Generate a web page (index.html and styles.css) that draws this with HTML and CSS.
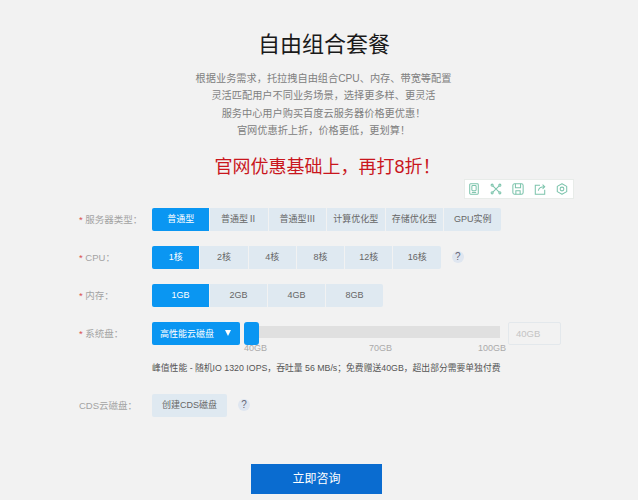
FILE: index.html
```html
<!DOCTYPE html>
<html lang="zh-CN">
<head>
    <meta charset="UTF-8">
    <title>自由组合套餐</title>
    <link rel="stylesheet" href="styles.css">
</head>
<body>
    <div class="wrap">
        <!-- Intro -->
        <h1 class="title">自由组合套餐</h1>
        <div class="intro">
            <p>根据业务需求，托拉拽自由组合CPU、内存、带宽等配置</p>
            <p>灵活匹配用户不同业务场景，选择更多样、更灵活</p>
            <p>服务中心用户购买百度云服务器价格更优惠！</p>
            <p>官网优惠折上折，价格更低，更划算！</p>
        </div>
        <h2 class="promo">官网优惠基础上，再打8折！</h2>

        <!-- Toolbar -->
        <div class="toolbar-row">
            <div class="toolbar">
                <svg viewBox="0 0 14 14"><rect x="2" y="1" width="10" height="12" rx="1"/><rect x="4.500" y="3" width="5" height="6" rx="1"/><path d="M4.500 11h5"/></svg>
                <svg viewBox="0 0 14 14"><path d="M3 3l8 8M11 3l-8 8"/><circle cx="2.500" cy="2.500" r="1.200"/><circle cx="11.500" cy="2.500" r="1.200"/><circle cx="2.500" cy="11.500" r="1.200"/><circle cx="11.500" cy="11.500" r="1.200"/></svg>
                <svg viewBox="0 0 14 14"><rect x="1" y="1" width="12" height="12" rx="2"/><path d="M4 1v4.500h6v-4.500M4.500 13v-4h5v4"/></svg>
                <svg viewBox="0 0 14 14"><path d="M7 2.500h-5.500v10.500h11v-5"/><path d="M5 9c.5-3 3-4.500 7.500-4.500M10 2l2.500 2.500-2.500 2.500"/></svg>
                <svg viewBox="0 0 14 14"><path d="M7 .8l5.500 3.100v6.200l-5.500 3.100-5.500-3.100v-6.200z" stroke-linejoin="round"/><circle cx="7" cy="7" r="2.200"/></svg>
            </div>
        </div>

        <!-- Config form -->
        <div class="row">
            <div class="label"><span class="req">*</span> 服务器类型：</div>
            <div class="group wide">
                <span class="opt on">普通型</span>
                <span class="opt">普通型Ⅱ</span>
                <span class="opt">普通型Ⅲ</span>
                <span class="opt">计算优化型</span>
                <span class="opt">存储优化型</span>
                <span class="opt">GPU实例</span>
            </div>
        </div>
        <div class="row">
            <div class="label"><span class="req">*</span> CPU：</div>
            <div class="group small">
                <span class="opt on">1核</span>
                <span class="opt">2核</span>
                <span class="opt">4核</span>
                <span class="opt">8核</span>
                <span class="opt">12核</span>
                <span class="opt">16核</span>
            </div>
            <span class="help">?</span>
        </div>
        <div class="row">
            <div class="label"><span class="req">*</span> 内存：</div>
            <div class="group">
                <span class="opt on">1GB</span>
                <span class="opt">2GB</span>
                <span class="opt">4GB</span>
                <span class="opt">8GB</span>
            </div>
        </div>
        <div class="row disk-row">
            <div class="label"><span class="req">*</span> 系统盘：</div>
            <div class="select">高性能云磁盘<i class="arrow"></i></div>
            <div class="slider">
                <div class="track"><span class="thumb"></span></div>
                <div class="marks">
                    <span>40GB</span>
                    <span class="mid">70GB</span>
                    <span>100GB</span>
                </div>
            </div>
            <div class="size-input">40GB</div>
        </div>
        <p class="note">峰值性能 - 随机IO 1320 IOPS，吞吐量 56 MB/s；免费赠送40GB，超出部分需要单独付费</p>
        <div class="row cds-row">
            <div class="label">CDS云磁盘：</div>
            <span class="opt create">创建CDS磁盘</span>
            <span class="help">?</span>
        </div>

        <div class="submit-row">
            <a class="submit">立即咨询</a>
        </div>
    </div>
</body>
</html>
```

FILE: styles.css
```css
/* General body styling */
body {
    margin: 0;
    background-color: #f2f2f2;
    font-family: "Liberation Sans", "Noto Sans CJK SC", sans-serif;
    color: #666;
}

.wrap {
    height: 500px;
    overflow: hidden;
    padding-left: 79px;
    box-sizing: border-box;
}

/* Intro */
.title {
    margin: 30px 0 0 -79px;
    padding-left: 10px;
    font-size: 22px;
    line-height: 30px;
    font-weight: 400;
    color: #1a1a1a;
    text-align: center;
}

.intro {
    margin: 10px 0 0 -79px;
    padding-left: 9px;
    text-align: center;
    font-size: 10.200px;
    line-height: 17.400px;
    color: #808080;
}

.intro p {
    margin: 0;
}

.promo {
    margin: 15px 0 0 -79px;
    padding-left: 17px;
    text-align: center;
    font-size: 18px;
    line-height: 24px;
    font-weight: 400;
    color: #c9161d;
}

/* Toolbar */
.toolbar-row {
    display: flex;
    margin-top: 0;
    padding-left: 385px;
}

.toolbar {
    display: flex;
    align-items: center;
    gap: 10px;
    height: 18px;
    padding: 0 5px 0 3px;
    background: #fff;
    border: 1px solid #e8ece9;
}

.toolbar svg {
    width: 12px;
    height: 12px;
    fill: none;
    stroke: #7cc4ac;
    stroke-width: 1.200;
}

/* Form rows */
.row {
    display: flex;
    align-items: center;
    height: 23px;
    margin-top: 15px;
}

.toolbar-row + .row {
    margin-top: 9px;
}

.label {
    width: 73px;
    flex: none;
    font-size: 9.500px;
    color: #a3a3a3;
    white-space: nowrap;
}

.req {
    color: #d9534f;
}

.group {
    display: flex;
    gap: 1px;
}

.opt {
    display: block;
    width: 57px;
    height: 23px;
    line-height: 23px;
    text-align: center;
    font-size: 9px;
    color: #666;
    background: #dfe9f1;
    white-space: nowrap;
}

.group .opt:first-child {
    border-radius: 2px 0 0 2px;
}

.group .opt:last-child {
    border-radius: 0 2px 2px 0;
}

.group.wide .opt {
    width: 57.400px;
}

.group.small .opt {
    width: 47.300px;
}

.opt.on {
    background: #0a96f2;
    color: #fff;
}

.opt.create {
    width: 75px;
    border-radius: 2px;
}

.help {
    width: 12px;
    height: 12px;
    margin-left: 11px;
    border-radius: 50%;
    background: #dfe6f0;
    color: #667;
    font-size: 10px;
    line-height: 12px;
    text-align: center;
}

/* System disk */
.select {
    display: flex;
    align-items: center;
    flex: none;
    width: 88px;
    height: 23px;
    padding-left: 8px;
    box-sizing: border-box;
    border-radius: 2px;
    background: #0a96f2;
    color: #fff;
    font-size: 9px;
}

.arrow {
    width: 0;
    height: 0;
    margin-left: 11px;
    border-left: 3.500px solid transparent;
    border-right: 3.500px solid transparent;
    border-top: 6px solid #fff;
}

.slider {
    position: relative;
    width: 256px;
    height: 23px;
    margin-left: 4px;
    flex: none;
}

.track {
    height: 12px;
    margin-top: 4px;
    background: #e0e0e0;
}

.thumb {
    position: absolute;
    left: 0;
    top: 0;
    width: 15px;
    height: 23px;
    border-radius: 3px;
    background: #0a96f2;
}

.marks {
    position: absolute;
    left: 0;
    right: -6px;
    top: 20px;
    display: flex;
    justify-content: space-between;
    font-size: 9px;
    line-height: 12px;
    color: #aaa;
}

.marks .mid {
    margin-left: 16px;
}

.size-input {
    width: 53px;
    height: 23px;
    margin-left: 8px;
    padding-left: 7px;
    box-sizing: border-box;
    border: 1px solid #e3e8ec;
    border-radius: 2px;
    font-size: 9.500px;
    line-height: 21px;
    color: #c4c4c4;
}

.note {
    margin: 16px 0 0 73px;
    font-size: 8.800px;
    line-height: 14px;
    color: #555;
    white-space: nowrap;
}

.cds-row {
    margin-top: 19px;
}

/* Submit button */
.submit-row {
    margin: 47px 0 0 172px;
}

.submit {
    display: block;
    width: 131px;
    height: 30px;
    line-height: 30px;
    text-align: center;
    font-size: 12px;
    color: #fff;
    background: #0a6cd0;
}
```
